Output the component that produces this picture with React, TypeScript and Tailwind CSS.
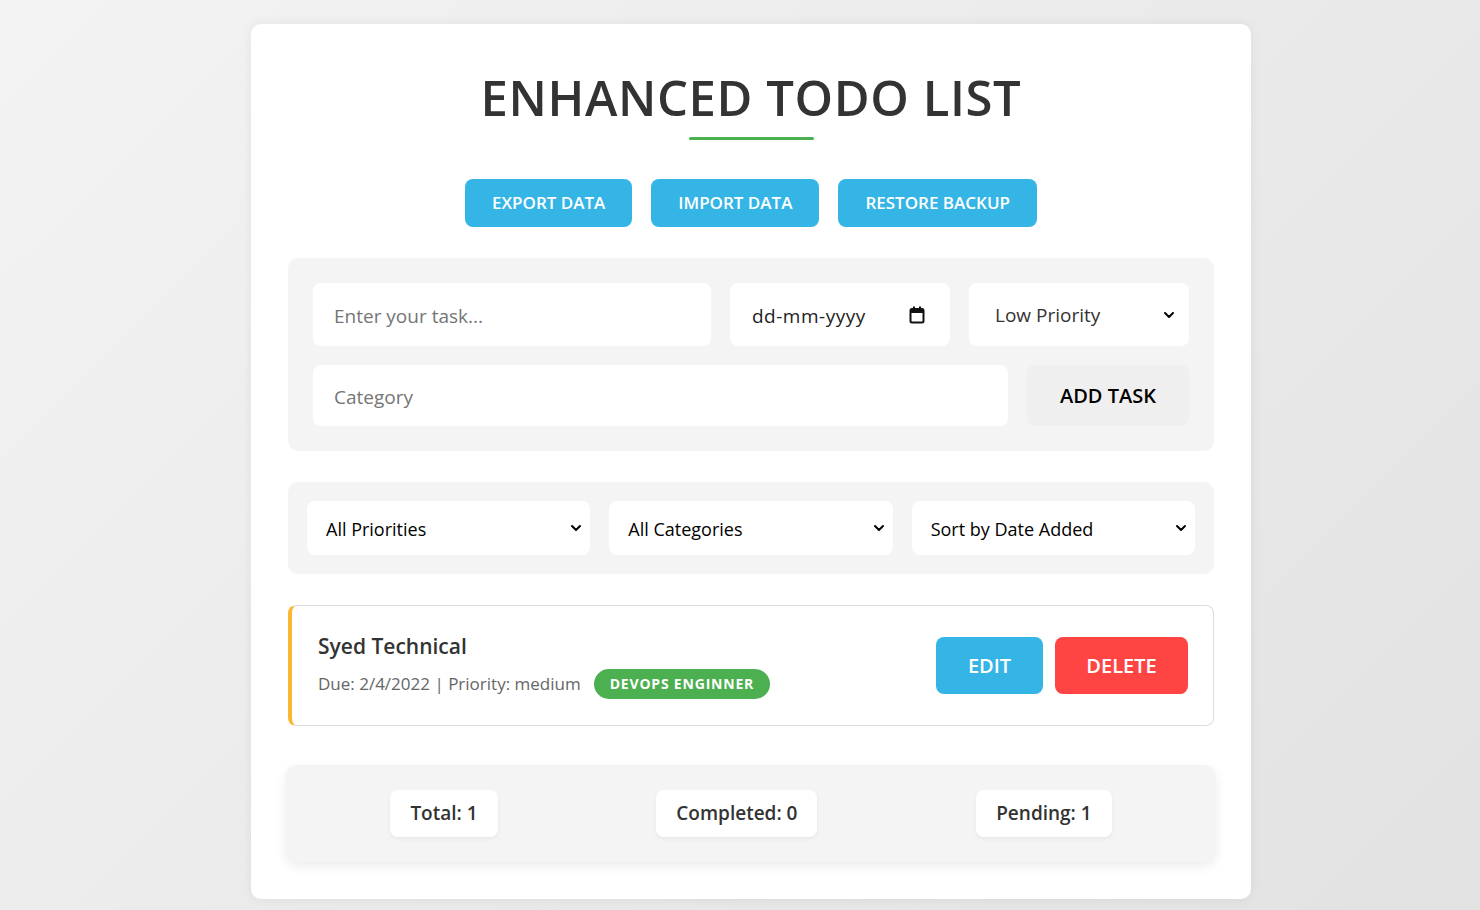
import { ChevronDown } from 'lucide-react';

const font = { fontFamily: '"Open Sans", "Noto Sans", sans-serif' };

function Select({ label, className }: { label: string; className: string }) {
  return (
    <div className={`relative flex items-center rounded-lg bg-white ${className}`}>
      <span className="flex-1 truncate pt-[2px]">{label}</span>
      <ChevronDown className="h-4 w-4 shrink-0 text-black" strokeWidth={3} />
    </div>
  );
}

function CalendarIcon() {
  return (
    <svg className="h-[18px] w-[16px]" viewBox="0 0 16 18" fill="none">
      <rect x="1.5" y="3" width="13" height="13.5" rx="1.5" stroke="#111" strokeWidth="2" />
      <rect x="1.5" y="3" width="13" height="4" fill="#111" />
      <rect x="4" y="0.5" width="2" height="3" fill="#111" />
      <rect x="10" y="0.5" width="2" height="3" fill="#111" />
    </svg>
  );
}

export default function App() {
  return (
    <div
      className="min-h-[910px] w-full bg-[linear-gradient(135deg,#f3f3f3_0%,#e2e2e2_100%)] pt-6 pb-3 pl-[22px]"
      style={font}
    >
      <div className="mx-auto w-[1000px] rounded-[10px] bg-white px-[37px] pt-[44px] pb-[37px] shadow-[0_0_12px_rgba(0,0,0,0.06)]">
        <h1 className="text-center text-[49px] leading-[58px] font-semibold tracking-[0.6px] text-[#333]">
          ENHANCED TODO LIST
        </h1>
        <div className="mx-auto mt-[11px] h-[3px] w-[125px] rounded-full bg-[#4caf50]" />

        <div className="mt-[39px] flex justify-center gap-[19px]">
          {['EXPORT DATA', 'IMPORT DATA', 'RESTORE BACKUP'].map((t) => (
            <button
              key={t}
              className="h-12 rounded-lg bg-[#35b5e5] px-[27px] text-[17px] font-semibold text-white"
            >
              {t}
            </button>
          ))}
        </div>

        <div className="mt-[31px] flex flex-col gap-[19px] rounded-[10px] bg-[#f4f4f4] p-[25px]">
          <div className="flex gap-[19px]">
            <div className="flex h-[63px] w-[398px] items-center rounded-lg bg-white px-[21px] pt-[3px] text-[19px] text-[#757575]">
              Enter your task...
            </div>
            <div className="flex h-[63px] w-[220px] items-center justify-between rounded-lg bg-white pr-[25px] pl-[22px] text-[19px] text-[#222]">
              <span className="pt-[3px] tracking-[0.5px]">dd-mm-yyyy</span>
              <CalendarIcon />
            </div>
            <Select
              label="Low Priority"
              className="h-[63px] flex-1 pr-[12px] pl-[26px] text-[19px] text-[#333]"
            />
          </div>
          <div className="flex gap-[19px]">
            <div className="flex h-[61px] w-[695px] items-center rounded-lg bg-white px-[21px] pt-[3px] text-[19px] text-[#757575]">
              Category
            </div>
            <button className="h-[61px] flex-1 rounded-lg bg-[#efefef] text-[20px] font-semibold text-black">
              ADD TASK
            </button>
          </div>
        </div>

        <div className="mt-[31px] flex gap-[19px] rounded-[10px] bg-[#f4f4f4] p-[19px]">
          {['All Priorities', 'All Categories', 'Sort by Date Added'].map((l) => (
            <Select
              key={l}
              label={l}
              className="h-[54px] flex-1 pr-[6px] pl-[19px] text-[18px] text-black"
            />
          ))}
        </div>

        <div className="mt-[31px] flex items-center justify-between rounded-lg border border-l-4 border-[#ddd] border-l-[#fbb72f] py-[26px] pr-[25px] pl-[26px]">
          <div>
            <div className="text-[21px] leading-[28px] font-semibold text-[#333]">Syed Technical</div>
            <div className="mt-[9px] flex items-center gap-[13px] text-[17px] text-[#666]">
              <span>Due: 2/4/2022 | Priority: medium</span>
              <span className="rounded-full bg-[#4caf50] px-[16px] py-[4px] text-[14px] leading-[22px] font-bold tracking-[0.8px] text-white">
                DEVOPS ENGINNER
              </span>
            </div>
          </div>
          <div className="flex gap-3">
            <button className="h-[57px] w-[107px] rounded-lg bg-[#35b5e5] text-[20px] font-semibold text-white">
              EDIT
            </button>
            <button className="h-[57px] w-[133px] rounded-lg bg-[#ff4444] text-[20px] font-semibold text-white">
              DELETE
            </button>
          </div>
        </div>

        <div className="-mx-[2px] mt-[39px] flex justify-around rounded-xl bg-[#f4f4f4] p-[25px] shadow-[0_4px_12px_rgba(0,0,0,0.08)]">
          {['Total: 1', 'Completed: 0', 'Pending: 1'].map((s) => (
            <div
              key={s}
              className="flex h-[47px] items-center rounded-lg bg-white px-5 text-[19px] font-semibold text-[#333] shadow-[0_2px_4px_rgba(0,0,0,0.05)]"
            >
              {s}
            </div>
          ))}
        </div>
      </div>
    </div>
  );
}
